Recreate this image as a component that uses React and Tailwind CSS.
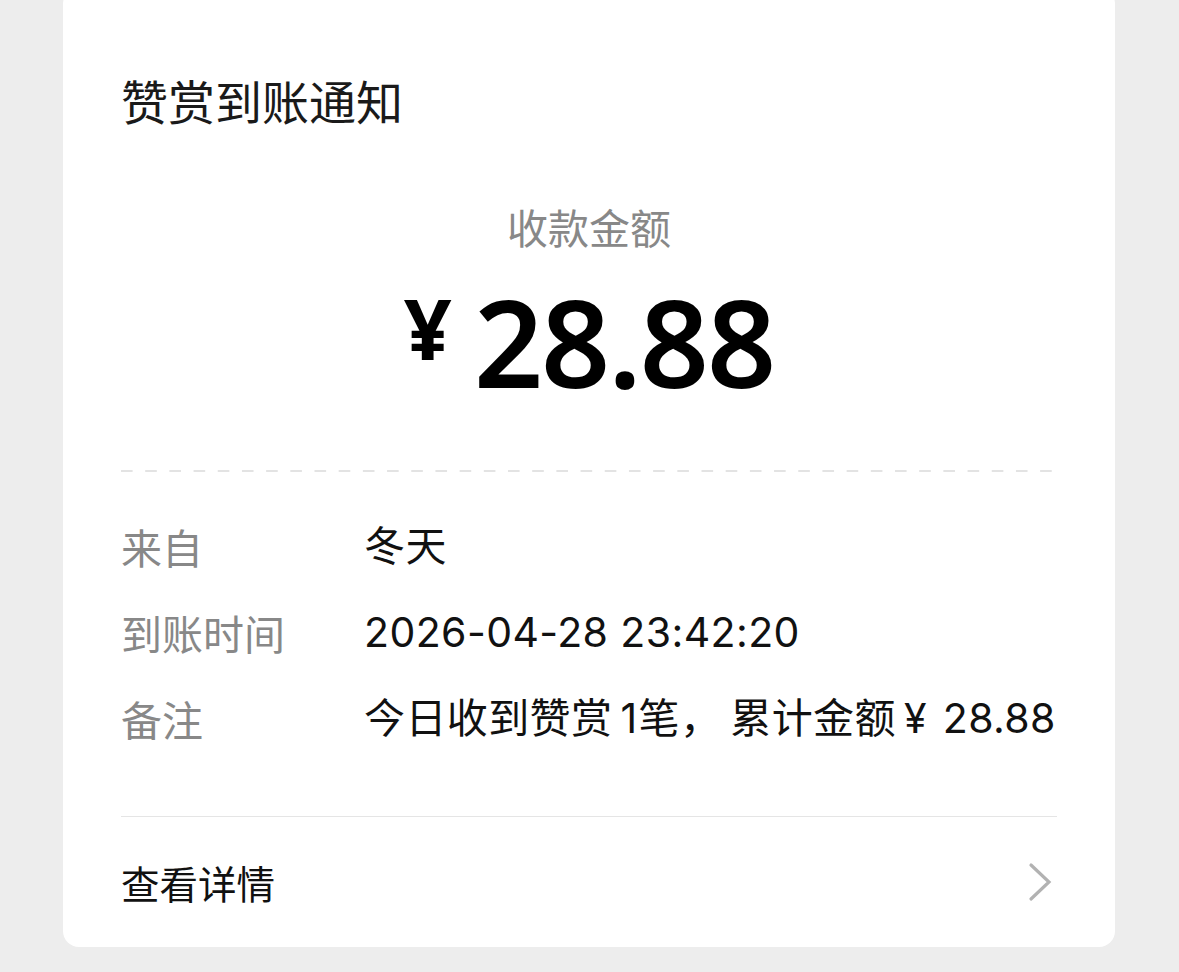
export default function App() {
  const cjk = { fontFamily: '"Noto Sans CJK SC", "Noto Sans", sans-serif' };
  const mixed = { fontFamily: 'Inter, "Noto Sans CJK SC", sans-serif' };
  const rows = [
    ['来自', <>冬天</>],
    ['到账时间', <>2026-04-28 23:42:20</>],
    [
      '备注',
      <>
        今日收到赞赏<span className="ml-[8px] mr-[1px]">1</span>笔，<span className="ml-[9px]">累计金额</span>
        <span className="ml-[8px] mr-[4px]">¥</span> 28.88
      </>,
    ],
  ];
  return (
    <div className="flex min-h-[972px] flex-col bg-[#ededed] pl-[63px] pr-[64px]" style={cjk}>
      <div className="-mt-[12px] flex flex-col rounded-[16px] bg-white px-[58px] pt-[81px]">
        <div className="flex h-[60px] items-center text-[47px] leading-none text-[#1a1a1a]">
          赞赏到账通知
        </div>
        <div className="mt-[72px] flex h-[50px] items-center justify-center text-[41px] leading-none text-[#888888]">
          收款金额
        </div>
        <div className="mt-[25px] flex h-[130px] items-center justify-center text-black" style={{ fontFamily: '"Noto Sans", sans-serif' }}>
          <span className="mr-[22px] mt-[-26px] text-[84px] font-bold leading-none">¥</span>
          <span className="text-[121px] font-semibold leading-none tracking-[-2px]">28.88</span>
        </div>
        <div className="mt-[64px] h-[2px] w-full bg-[linear-gradient(to_right,#e3e3e3_50%,transparent_50%)] bg-[length:24.2px_2px]" />
        <div className="mt-[31px] flex flex-col text-[41px] leading-none">
          {rows.map(([k, v]) => (
            <div key={k} className="flex h-[86px] items-center">
              <div className="w-[243px] shrink-0 text-[#888888]">{k}</div>
              <div className="whitespace-nowrap tracking-[0.4px] text-[#111111]" style={mixed}>{v}</div>
            </div>
          ))}
        </div>
        <div className="mt-[55px] h-px w-full bg-[#e5e5e5]" />
        <div className="flex h-[130px] items-center justify-between">
          <div className="text-[38.5px] leading-none text-[#111111]">查看详情</div>
          <svg width="24" height="40" viewBox="0 0 24 40" className="mr-[5px]">
            <polyline points="3,3 21,20 3,37" fill="none" stroke="#b2b2b2" strokeWidth="3.2" strokeLinecap="round" strokeLinejoin="miter" />
          </svg>
        </div>
      </div>
    </div>
  );
}
